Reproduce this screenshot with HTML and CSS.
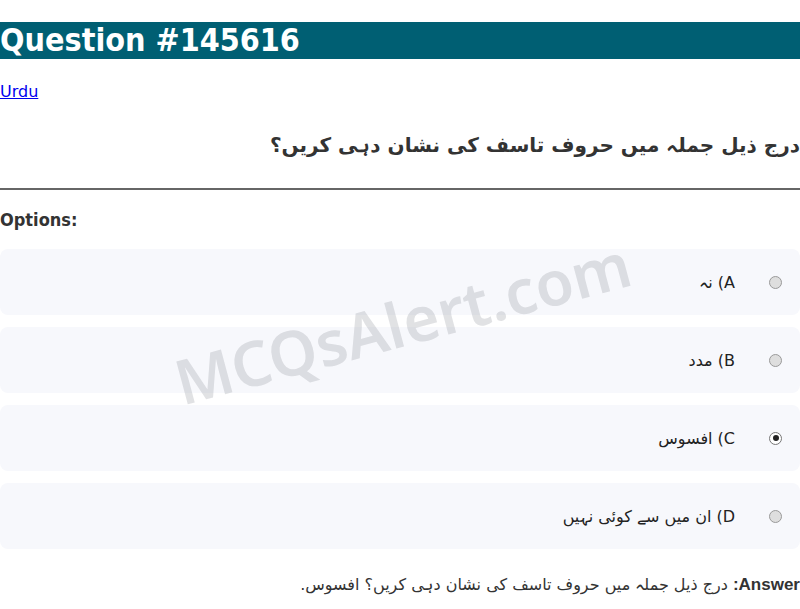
FILE: index.html
```html
<!DOCTYPE html>
<html lang="ur">
<head>
<meta charset="utf-8">
<title>Question #145616</title>
<link rel="stylesheet" href="styles.css">
</head>
<body>
<h1 class="title">Question #145616</h1>
<p class="lang"><a href="#">Urdu</a></p>
<h2 class="question" dir="rtl">درج ذیل جملہ میں حروف تاسف کی نشان دہی کریں؟</h2>
<hr class="divider">
<h3 class="options-label">Options:</h3>
<div class="options" dir="rtl">
  <label class="option"><span class="radio"></span><span class="opt-text">A) نہ</span></label>
  <label class="option"><span class="radio"></span><span class="opt-text">B) مدد</span></label>
  <label class="option"><span class="radio checked"></span><span class="opt-text">C) افسوس</span></label>
  <label class="option"><span class="radio"></span><span class="opt-text">D) ان میں سے کوئی نہیں</span></label>
</div>
<p class="answer" dir="rtl"><strong class="answer-label">Answer:</strong> درج ذیل جملہ میں حروف تاسف کی نشان دہی کریں؟ افسوس.</p>
<div class="watermark">MCQsAlert.com</div>
</body>
</html>
```
FILE: styles.css
```css
html, body {
  margin: 0;
  padding: 0;
  background: #fff;
}
body {
  font-family: "DejaVu Sans", sans-serif;
  color: #333;
  position: relative;
}
.title {
  margin: 22px 0 21px;
  font-family: "DejaVu Sans Condensed", "DejaVu Sans", sans-serif;
  font-stretch: condensed;
  font-size: 32px;
  font-weight: bold;
  background: #005f73;
  color: #fff;
  line-height: 37px;
}
.lang {
  margin: 23px 0 0;
  font-size: 16px;
  line-height: 19px;
}
.lang a {
  color: #0000ee;
}
.question {
  text-align: right;
  font-size: 20px;
  font-weight: bold;
  margin: 29px 0 0;
  line-height: 30px;
}
.divider {
  margin: 28px 0 0;
  border: 0;
  border-top: 2px solid #666;
  height: 0;
}
.options-label {
  font-family: "DejaVu Sans Condensed", "DejaVu Sans", sans-serif;
  font-stretch: condensed;
  font-size: 18px;
  font-weight: bold;
  margin: 18px 0 0;
  line-height: 24px;
}
.options {
  display: flex;
  flex-direction: column;
  gap: 12px;
  margin-top: 17px;
}
.option {
  display: flex;
  align-items: center;
  height: 66px;
  background: #f7f8fc;
  border-radius: 8px;
  padding: 0 18px;
  gap: 34px;
  font-size: 16px;
  color: #222;
}
.radio {
  width: 13px;
  height: 13px;
  border-radius: 50%;
  border: 1px solid #9a9a9a;
  background: #dedede;
  box-sizing: border-box;
  flex: none;
}
.radio.checked {
  background: #fff;
  border-color: #777;
  position: relative;
}
.radio.checked::after {
  content: "";
  position: absolute;
  left: 2.5px;
  top: 2.5px;
  width: 6px;
  height: 6px;
  border-radius: 50%;
  background: #222;
}
.answer {
  margin: 26px 0 0;
  font-size: 16px;
  line-height: 20px;
  color: #333;
}
.answer-label {
  font-family: "Liberation Sans", sans-serif;
  font-size: 17px;
}
.watermark {
  position: absolute;
  left: 168px;
  top: 280px;
  font-family: "Noto Sans", sans-serif;
  font-size: 62px;
  font-weight: 600;
  color: rgba(140, 142, 150, 0.26);
  transform: rotate(-15deg);
  pointer-events: none;
  white-space: nowrap;
}
```
